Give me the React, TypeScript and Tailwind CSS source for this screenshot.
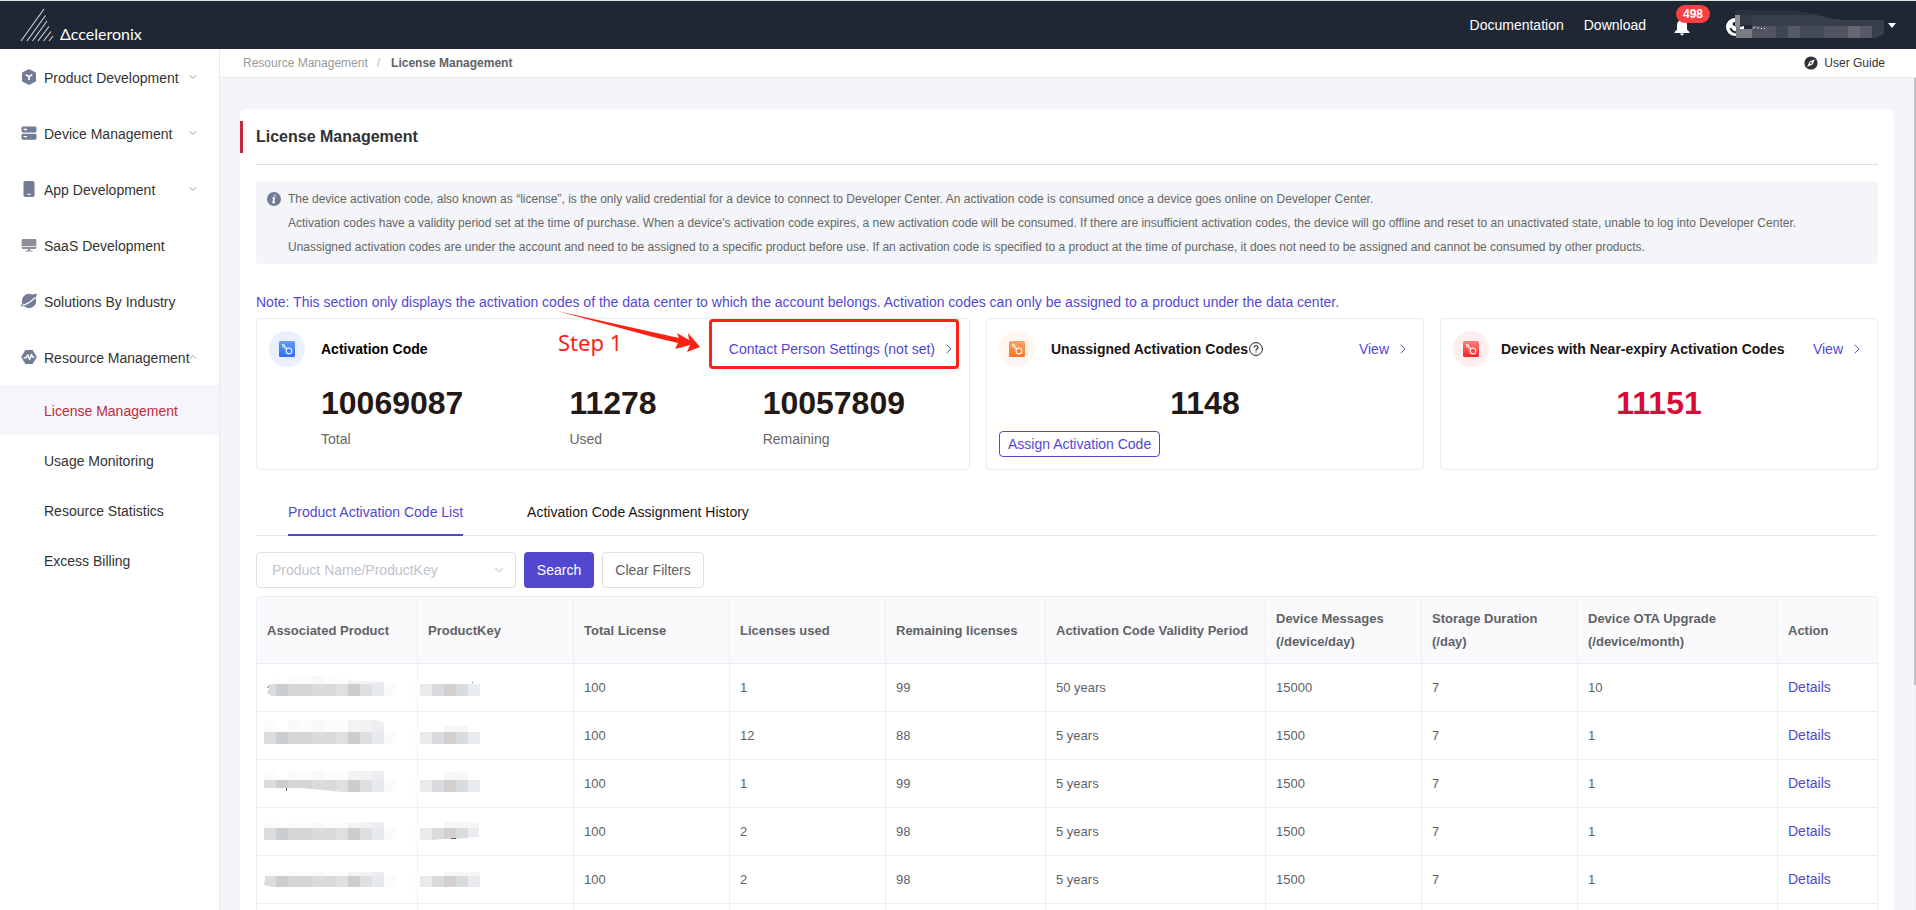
import React, { useState } from 'react'
import { ChevronDown, ChevronRight, ChevronUp } from 'lucide-react'

const menus = [
  { name: 'Product Development', icon: 'product', arrow: 'down' },
  { name: 'Device Management', icon: 'device', arrow: 'down' },
  { name: 'App Development', icon: 'app', arrow: 'down' },
  { name: 'SaaS Development', icon: 'saas', arrow: '' },
  { name: 'Solutions By Industry', icon: 'industry', arrow: '' },
  { name: 'Resource Management', icon: 'resource', arrow: 'up' },
];

const subMenus = ['License Management', 'Usage Monitoring', 'Resource Statistics', 'Excess Billing'];

const tips = [
  'The device activation code, also known as “license”, is the only valid credential for a device to connect to Developer Center. An activation code is consumed once a device goes online on Developer Center.',
  "Activation codes have a validity period set at the time of purchase. When a device's activation code expires, a new activation code will be consumed. If there are insufficient activation codes, the device will go offline and reset to an unactivated state, unable to log into Developer Center.",
  'Unassigned activation codes are under the account and need to be assigned to a specific product before use. If an activation code is specified to a product at the time of purchase, it does not need to be assigned and cannot be consumed by other products.',
];

const columns = [
  { title: 'Associated Product', width: 'w-[161px]' },
  { title: 'ProductKey', width: 'w-[156px]' },
  { title: 'Total License', width: 'w-[156px]' },
  { title: 'Licenses used', width: 'w-[156px]' },
  { title: 'Remaining licenses', width: 'w-[160px]' },
  { title: 'Activation Code Validity Period', width: 'w-[220px]' },
  { title: 'Device Messages (/device/day)', width: 'w-[156px]' },
  { title: 'Storage Duration (/day)', width: 'w-[156px]' },
  { title: 'Device OTA Upgrade (/device/month)', width: 'w-[200px]' },
  { title: 'Action', width: 'w-[100px]' },
];

const rows = [
  { total: 100, used: 1, left: 99, period: '50 years', messages: 15000, storage: 7, ota: 10 },
  { total: 100, used: 12, left: 88, period: '5 years', messages: 1500, storage: 7, ota: 1 },
  { total: 100, used: 1, left: 99, period: '5 years', messages: 1500, storage: 7, ota: 1 },
  { total: 100, used: 2, left: 98, period: '5 years', messages: 1500, storage: 7, ota: 1 },
  { total: 100, used: 2, left: 98, period: '5 years', messages: 1500, storage: 7, ota: 1 },
  { total: 100, used: 1, left: 99, period: '5 years', messages: 1500, storage: 7, ota: 1 },
];

const nameColors = ['#dddcdb', '#caced1', '#d6d6d6', '#d5d6d8', '#dadbdd', '#dcdad9', '#dfe0e2', '#cecccd', '#dfdfdf', '#e5eaee', '#fafafb'];
const nameFaint = ['#fbfbfb', '#ffffff', '#fafafa', '#fcfcfc', '#f8f8f8', '#fbfcfc', '#fcfcfc', '#f3f3f3', '#f2f2f2', '#eeeef0'];
const keyColors = ['#eaeae9', '#d9dadd', '#d4d0d0', '#d8dcdf', '#eaebee'];

// outline of the hidden product name in each row, the pixels are clipped to it
const nameShapes = [
  'M3 25 L7 16 L9 8 H60 L95 13 L120 14 V16 H132 V28 H7 Z',
  'M0 4 H108 L120 6 V16 H132 V28 H0 Z',
  'M0 7 H120 V16 H132 V28 H78 L48 25 L36 24 H0 Z',
  'M0 13 L3 11 H92 L98 10 H120 V16 H132 V28 H0 Z',
  'M2 12 H120 V16 H132 V27 H10 L0 25 Z',
];
const keyShapes = [
  'M0 16 H60 V28 H0 Z',
  'M0 16 H24 V10 H48 V16 H60 V28 H0 Z',
  'M0 16 H24 V8 H36 L48 10 V16 H60 V28 H0 Z',
  'M0 16 H24 V10 H59 V25 L36 27 H24 L12 28 H0 Z',
  'M0 16 H24 V12 H60 V27 H0 Z',
];

const MenuIcon = ({ type }: { type: string }) => (
  <svg viewBox="0 0 16 16" className="h-4 w-4 shrink-0" fill="#737c96">
    {type === 'product' && (
      <>
        <path d="M8 0 L14.4 3.2 Q15 3.6 15 4.4 V11.6 Q15 12.4 14.4 12.8 L8 16 L1.6 12.8 Q1 12.4 1 11.6 V4.4 Q1 3.6 1.6 3.2 Z" />
        <path d="M4.8 5.6 L8 7.6 L11.2 5.6 M8 7.6 V11" stroke="#fff" strokeWidth="1.7" fill="none" />
      </>
    )}
    {type === 'device' && (
      <>
        <rect x="0.5" y="1.5" width="15" height="6" rx="1.4" />
        <rect x="0.5" y="8.7" width="15" height="6" rx="1.4" />
        <path d="M2.6 4.5 H6 M2.6 11.7 H6" stroke="#fff" strokeWidth="1.3" />
      </>
    )}
    {type === 'app' && (
      <>
        <rect x="2.5" y="0" width="11" height="16" rx="1.8" />
        <path d="M6.4 13.4 H9.6" stroke="#fff" strokeWidth="1.2" />
      </>
    )}
    {type === 'saas' && (
      <g fill="#8d9099">
        <path d="M2 2 H14 Q15.4 2 15.4 3.4 V9 H0.6 V3.4 Q0.6 2 2 2 Z" />
        <path d="M0.6 9.8 H15.4 V10.6 Q15.4 12 14 12 H2 Q0.6 12 0.6 10.6 Z" />
        <path d="M7 12 H9 V13.6 H11.5 V14.6 H4.5 V13.6 H7 Z" />
      </g>
    )}
    {type === 'industry' && (
      <>
        <circle cx="8" cy="8" r="7.2" />
        <path d="M11.5 1.6 Q15.5 0.2 15.8 1.5 Q16 3.5 13 6 Z" />
        <path d="M-0.5 12.6 Q7.5 11.8 14.2 4.4" stroke="#fff" strokeWidth="1.3" fill="none" />
        <path d="M0.6 11 Q-0.2 12.4 0.3 13.4 L3 13 Z" />
      </>
    )}
    {type === 'resource' && (
      <>
        <path d="M4.4 1 H11.6 L15.6 7.4 Q16 8 15.6 8.6 L11.6 15 H4.4 L0.4 8.6 Q0 8 0.4 7.4 Z" />
        <path d="M2.6 8.8 H5 L6.8 6 L8.6 10.4 L10.4 5.4 L11.6 8 H13.4" stroke="#fff" strokeWidth="1.5" fill="none" strokeLinejoin="round" />
      </>
    )}
  </svg>
);

const KeyIcon = ({ id, from, to, circle }: { id: string; from: string; to: string; circle: string }) => (
  <svg viewBox="0 0 36 36" className="h-9 w-9 shrink-0" fill="none">
    <defs>
      <linearGradient id={id} x1="0" y1="0" x2="0" y2="1">
        <stop offset="0" stopColor={from} />
        <stop offset="1" stopColor={to} />
      </linearGradient>
    </defs>
    <circle cx="18" cy="18" r="18" fill={circle} />
    <rect x="10" y="10" width="16" height="16" rx="1.5" fill={`url(#${id})`} />
    <g stroke="#fff" strokeOpacity="0.85" strokeWidth="1.2">
      <circle cx="20" cy="20" r="2.9" />
      <path d="M18 17.8 L13 12.8 M13.2 16 L15 14.6 M15.4 17.6 L17 16.2 M15.6 13.4 L14.6 15" />
    </g>
  </svg>
);

const NameMosaic = ({ row }: { row: number }) => (
  <svg width="132" height="40" className="block overflow-visible">
    <clipPath id={`name${row}`}>
      <path d={nameShapes[row]} />
    </clipPath>
    <g clipPath={`url(#name${row})`} shapeRendering="crispEdges">
      {nameFaint.map((c, i) => (
        <rect key={i} x={i * 12} y="4" width="12" height="12" fill={c} />
      ))}
      {nameColors.map((c, i) => (
        <rect key={i} x={i * 12} y="16" width="12" height="12" fill={c} />
      ))}
    </g>
    {row === 0 && <path d="M3.5 20 L5.5 17.5" stroke="#606266" />}
    {row === 2 && <path d="M22.5 24 V27" stroke="#606266" />}
  </svg>
);

const KeyMosaic = ({ row }: { row: number }) => (
  <svg width="60" height="40" className="block overflow-visible">
    <rect x="-12" y="14" width="12" height="16" fill="#fdfdfd" />
    <clipPath id={`key${row}`}>
      <path d={keyShapes[row]} />
    </clipPath>
    <g clipPath={`url(#key${row})`} shapeRendering="crispEdges">
      <rect x="24" y="4" width="36" height="12" fill="#f6f6f7" />
      {keyColors.map((c, i) => (
        <rect key={i} x={i * 12} y="16" width="12" height="12" fill={c} />
      ))}
    </g>
    {row === 0 && <rect x="52" y="14" width="1" height="1" fill="#4a90d0" />}
    {row === 3 && <path d="M31 26.5 H36" stroke="#606266" />}
  </svg>
);

const Header = () => (
  <header className="flex h-[49px] shrink-0 items-center justify-between border-t border-[#dbe5df] bg-[#1f2735] pl-5 pr-5 text-sm text-white">
    <a href="#" className="flex items-end">
      <svg viewBox="0 0 34 34" className="h-[34px] w-[34px]" stroke="#fff" strokeWidth="1.1" strokeOpacity="0.8">
        <path d="M1 33 L24 1 M7 33 L25.5 7.5 M12.5 33 L27 13 M18 33 L29 18.5 M23.5 33 L31 23.5 M29 33 L33 28" />
      </svg>
      <span className="ml-1.5 font-[Lato,sans-serif] text-base leading-4">Δcceleronix</span>
    </a>
    <nav className="flex items-center">
      <a href="#">Documentation</a>
      <a href="#" className="ml-5">Download</a>
      <button type="button" className="relative ml-7 h-6" aria-label="Messages">
        <svg viewBox="0 0 16 18" className="mt-1 h-[18px] w-4" fill="#fff">
          <path d="M8 0.5 Q9.3 0.5 9.3 2 Q13 3 13 7.5 V11.5 L15.5 14 V15 H0.5 V14 L3 11.5 V7.5 Q3 3 6.7 2 Q6.7 0.5 8 0.5 Z" />
          <path d="M6 15.6 H10 Q9.8 17.4 8 17.4 Q6.2 17.4 6 15.6 Z" />
        </svg>
        <span className="absolute -top-2 left-0.5 flex h-[18px] items-center rounded-full bg-[#fc3f40] px-[7px] text-xs font-bold">
          498
        </span>
      </button>
      <button type="button" className="ml-9 flex items-center" aria-label="Account">
        <svg width="160" height="30" className="block">
          <circle cx="9" cy="17" r="9" fill="#fff" />
          <path d="M4.5 18 Q6 23 13 22.5" stroke="#1f2735" strokeWidth="2" fill="none" />
          <circle cx="8.5" cy="14" r="2" fill="#1f2735" />
          <g shapeRendering="crispEdges">
            <path d="M9 0 H63 L85 3 L102 8 L118 10 H158 V24 L150 28 H10 Z" fill="#373d4a" />
            <path d="M9 0 H63 L85 3 L98 5 H9 Z" fill="#2b3341" />
            <path d="M9 5 H14 V17 H9 Z" fill="#8b8f96" />
            <path d="M14 5 H26 V16 H14 Z" fill="#323946" />
            <path d="M10 17 H26 V28 H10 Z" fill="#787c84" />
            <path d="M26 16 H50 V28 H26 Z" fill="#50555f" />
            <path d="M50 16 H62 V28 H50 Z" fill="#3f4551" />
            <path d="M62 16 H74 V28 H62 Z" fill="#555a65" />
            <path d="M74 16 H98 V28 H74 Z" fill="#444a56" />
            <path d="M98 16 H122 V28 H98 Z" fill="#50555f" />
            <path d="M122 16 H134 V28 H122 Z" fill="#646871" />
            <path d="M134 16 H146 V28 H134 Z" fill="#555a64" />
          </g>
          <path d="M14 15 H26 V19 H14 Z" fill="#1f2735" />
          <path d="M14 17 L18 16 V19 H14 Z" fill="#fff" />
          <path d="M27 18.5 L29 16.5 M32 18.5 V17 M35 18.5 H36 M38 18.5 H39" stroke="#fff" />
        </svg>
        <svg viewBox="0 0 8 5" className="ml-0.5 h-[5px] w-2" fill="#fff">
          <path d="M0 0 H8 L4 5 Z" />
        </svg>
      </button>
    </nav>
  </header>
);

const Sidebar = () => {
  const [active, setActive] = useState('License Management');
  return (
    <aside className="w-[220px] shrink-0 border-r border-[#e6e9f0] bg-white text-sm text-[#333]">
      {menus.map((m) => (
        <button type="button" key={m.name} className="relative flex h-14 w-full items-center whitespace-nowrap pl-[21px]">
          <MenuIcon type={m.icon} />
          <span className="ml-[7px] mt-0.5">{m.name}</span>
          {m.arrow === 'down' && <ChevronDown className="absolute right-5 h-3 w-3 text-[#909399]" strokeWidth={1.8} />}
          {m.arrow === 'up' && <ChevronUp className="absolute right-5 h-3 w-3 text-[#909399]" strokeWidth={1.8} />}
        </button>
      ))}
      {subMenus.map((s) => (
        <a
          href="#"
          key={s}
          onClick={() => setActive(s)}
          className={`flex h-[50px] items-center pl-11 ${active === s ? 'bg-[#f5f6fb] text-[#c2293c]' : ''}`}
        >
          <span className="mt-0.5">{s}</span>
        </a>
      ))}
    </aside>
  );
};

const ViewLink = ({ text }: { text: string }) => (
  <a href="#" className="ml-auto flex items-center gap-1.5 text-sm text-[#5248d0]">
    {text}
    <ChevronRight className="h-4 w-4" strokeWidth={1.4} />
  </a>
);

const Stat = ({ value, label }: { value: string; label: string }) => (
  <div>
    <div className="text-[32px] font-bold leading-10 text-[#231815]">{value}</div>
    <div className="mt-1.5 text-sm text-[#666]">{label}</div>
  </div>
);

// red marks of the tutorial drawn over the first card
const StepMark = () => (
  <>
    <svg width="144" height="44" className="pointer-events-none absolute -top-2 left-[300px]" fill="#ff2015">
      <path d="M0 0 L122 27 L120 22 L132 29 L131 22 L143 36 L130 41 L133 34 L118 38 L121 32 L100 27 Z" />
    </svg>
    <div className="pointer-events-none absolute left-[301px] top-[7px] font-['Noto_Sans',sans-serif] text-[22px] leading-8 text-[#ff2015]">
      Step 1
    </div>
    <div className="pointer-events-none absolute right-2.5 top-0 h-[50px] w-[250px] rounded-sm border-[3px] border-[#ff2015]" />
  </>
);

const SummaryCards = () => (
  <div className="grid grid-cols-[714fr_438fr_438fr] gap-4">
    <div className="relative h-[152px] rounded-sm border border-[#ebebed]">
      <div className="mt-3 flex items-center pl-3 pr-3">
        <KeyIcon id="blue" from="#5f9dfb" to="#2e6cf6" circle="#eaf0fe" />
        <h2 className="ml-4 text-sm font-bold text-black">Activation Code</h2>
        <ViewLink text="Contact Person Settings (not set)" />
      </div>
      <div className="mt-4 flex justify-between px-16">
        <Stat value="10069087" label="Total" />
        <Stat value="11278" label="Used" />
        <Stat value="10057809" label="Remaining" />
      </div>
      <StepMark />
    </div>
    <div className="h-[152px] rounded-sm border border-[#ebebed] px-3">
      <div className="mt-3 flex items-center">
        <KeyIcon id="orange" from="#fea268" to="#fe7426" circle="#fff6f1" />
        <h2 className="ml-4 flex items-center text-sm font-bold text-[#1c1412]">
          Unassigned Activation Codes
          <svg viewBox="0 0 16 16" className="h-4 w-4" fill="none" stroke="#231815" strokeWidth="1">
            <circle cx="8" cy="8" r="6.4" />
            <path d="M6 6.6 Q6 4.8 8 4.8 Q10 4.8 10 6.4 Q10 7.4 8.8 8 Q8 8.4 8 9.4 M8 10.4 V11.6" strokeWidth="1.1" />
          </svg>
        </h2>
        <ViewLink text="View" />
      </div>
      <div className="mt-4 text-center text-[32px] font-bold leading-10 text-[#231815]">1148</div>
      <button type="button" className="mt-2 flex h-[26px] items-center rounded-sm border border-[#5248d0] px-2 text-sm text-[#5248d0]">
        Assign Activation Code
      </button>
    </div>
    <div className="h-[152px] rounded-sm border border-[#ebebed] px-3">
      <div className="mt-3 flex items-center">
        <KeyIcon id="red" from="#fd8080" to="#fb2424" circle="#feeeee" />
        <h2 className="ml-3 text-sm font-bold text-[#1c1412]">Devices with Near-expiry Activation Codes</h2>
        <ViewLink text="View" />
      </div>
      <div className="mt-4 text-center text-[32px] font-bold leading-10 text-[#d90b36]">11151</div>
    </div>
  </div>
);

const LicenseTable = () => (
  <div className="mt-2 rounded-t-sm border-l border-t border-[#ebeef5]">
    <table className="w-full table-fixed border-separate border-spacing-0 text-left text-[13px] text-[#606266]">
      <thead>
        <tr className="h-[67px] bg-[#fafafc]">
          {columns.map((c) => (
            <th key={c.title} className={`${c.width} border-b border-r border-[#ebeef5] px-2.5 font-bold leading-[23px]`}>
              {c.title}
            </th>
          ))}
        </tr>
      </thead>
      <tbody>
        {rows.map((r, index) => (
          <tr key={index} className="h-12 [&>td]:border-b [&>td]:border-r [&>td]:border-[#ebeef5]">
            <td className="pl-[7px]">{index < 5 && <NameMosaic row={index} />}</td>
            <td className="pl-0.5">{index < 5 && <KeyMosaic row={index} />}</td>
            <td className="px-2.5">{r.total}</td>
            <td className="px-2.5">{r.used}</td>
            <td className="px-2.5">{r.left}</td>
            <td className="px-2.5">{r.period}</td>
            <td className="px-2.5">{r.messages}</td>
            <td className="px-2.5">{r.storage}</td>
            <td className="px-2.5">{r.ota}</td>
            <td className="px-2.5">
              <a href="#" className="text-sm text-[#5248d0]">Details</a>
            </td>
          </tr>
        ))}
      </tbody>
    </table>
  </div>
);

const App: React.FC = () => {
  const [product, setProduct] = useState('');
  const [tab, setTab] = useState(0);
  return (
    <div className="flex h-screen flex-col overflow-hidden bg-[#f3f5f9] font-['Liberation_Sans',Arial,sans-serif]">
      <Header />
      <div className="flex min-h-0 flex-1">
        <Sidebar />
        <div className="flex min-w-0 flex-1 flex-col">
          <div className="flex h-[29px] shrink-0 items-center justify-between border-b border-[#e9ebf1] bg-white pl-[23px] pr-[31px] text-xs">
            <div className="flex">
              <a href="#" className="text-[#999]">Resource Management</a>
              <span className="mx-[9px] text-[#b5b9c2]">/</span>
              <span className="ml-0.5 font-bold text-[#606266]">License Management</span>
            </div>
            <a href="#" className="flex items-center gap-1.5 text-[#333]">
              <svg viewBox="0 0 14 14" className="h-3.5 w-3.5">
                <circle cx="7" cy="7" r="6.6" fill="#2f3238" />
                <path d="M10.8 3.2 L8.6 8.4 L3.2 10.8 L5.6 5.6 Z" fill="#fff" />
                <circle cx="7" cy="7" r="0.9" fill="#2f3238" />
              </svg>
              User Guide
            </a>
          </div>
          <div className="flex min-h-0 flex-1">
            <main className="min-w-0 flex-1 overflow-y-auto pl-5 pr-5 pt-[31px] [scrollbar-width:none]">
              <div className="rounded-md bg-white pb-6 pt-3">
                <h1 className="flex h-8 items-center border-l-[3px] border-[#c2293c] pl-[13px] text-base font-bold text-[#303133]">
                  License Management
                </h1>
                <div className="px-4">
                  <div className="mt-[11px] border-t border-[#dcdfe9]" />
                  <div className="mt-4 flex rounded-sm bg-[#f3f5f9] px-[11px] pb-[5px] pt-1.5 text-xs leading-6 text-[#666]">
                    <svg viewBox="0 0 14 14" className="mt-[5px] h-3.5 w-3.5 shrink-0">
                      <circle cx="7" cy="7" r="7" fill="#737c96" />
                      <path d="M7.8 2.8 L7.5 4.2 M5.4 6 H7.2 L6.2 10.4 H8" stroke="#fff" strokeWidth="1.6" fill="none" />
                    </svg>
                    <div className="ml-[7px]">
                      {tips.map((t) => (
                        <p key={t}>{t}</p>
                      ))}
                    </div>
                  </div>
                  <p className="mb-1.5 mt-7 text-sm text-[#5248d0]">
                    Note: This section only displays the activation codes of the data center to which the account belongs. Activation codes
                    can only be assigned to a product under the data center.
                  </p>
                  <SummaryCards />
                  <div className="mt-4 flex h-[50px] gap-16 border-b border-[#e4e7ed] px-8 text-sm">
                    {['Product Activation Code List', 'Activation Code Assignment History'].map((name, index) => (
                      <button
                        type="button"
                        key={name}
                        onClick={() => setTab(index)}
                        className={`-mb-px border-b-2 pt-1 ${tab === index ? 'border-[#5248d0] text-[#5248d0]' : 'border-transparent text-[#1c1412]'}`}
                      >
                        {name}
                      </button>
                    ))}
                  </div>
                  <div className="mt-4 flex gap-2 text-sm">
                    <div className="relative w-[260px]">
                      <select
                        aria-label="Product Name/ProductKey"
                        value={product}
                        onChange={(e: any) => setProduct(e.target.value)}
                        className="h-9 w-full appearance-none rounded-sm border border-[#dcdfe6] bg-white pl-[15px] text-[#c0c4cc]"
                      >
                        <option value="">Product Name/ProductKey</option>
                      </select>
                      <ChevronDown className="pointer-events-none absolute right-2.5 top-[11px] h-3.5 w-3.5 text-[#c0c4cc]" strokeWidth={1.8} />
                    </div>
                    <button type="button" className="h-9 w-[70px] rounded-sm bg-[#5248d0] text-white">Search</button>
                    <button
                      type="button"
                      onClick={() => setProduct('')}
                      className="h-9 w-[102px] rounded-sm border border-[#dcdfe6] text-[#606266]"
                    >
                      Clear Filters
                    </button>
                  </div>
                  <LicenseTable />
                </div>
              </div>
            </main>
            <div className="w-0.5 shrink-0 bg-[#f1f1f1]">
              <div className="h-[73%] bg-[#c1c1c1]" />
            </div>
          </div>
        </div>
      </div>
    </div>
  );
};

export default App;
